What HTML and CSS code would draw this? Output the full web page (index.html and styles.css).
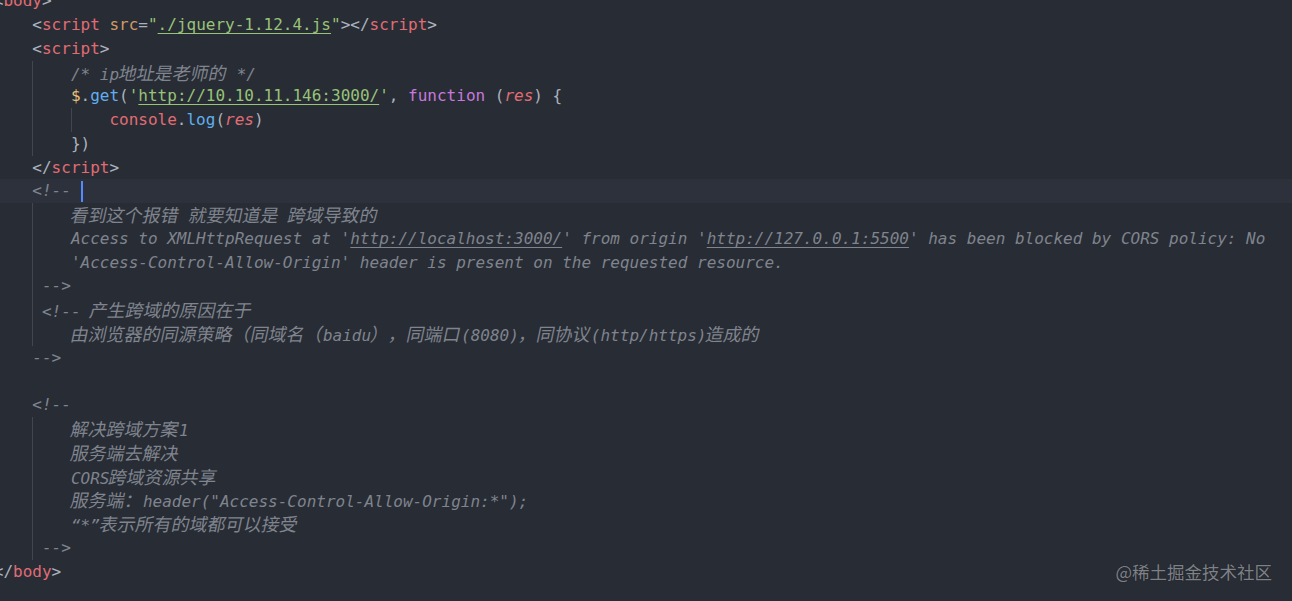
FILE: index.html
```html
<!DOCTYPE html>
<html lang="zh">
<head>
<meta charset="utf-8">
<title>editor</title>
<link rel="stylesheet" href="styles.css">
</head>
<body>
<main class="editor">
  <div class="code">
    <div class="ln">&lt;<span class="t">body</span>&gt;</div>
    <div class="ln">    &lt;<span class="t">script</span> <span class="a">src</span>=<span class="s">"<span class="u">./jquery-1.12.4.js</span>"</span>&gt;&lt;/<span class="t">script</span>&gt;</div>
    <div class="ln">    &lt;<span class="t">script</span>&gt;</div>
    <div class="ln g4">        <span class="c">/* ip<span class="zh">地址是老师的</span> */</span></div>
    <div class="ln g4">        <span class="y">$</span>.<span class="f">get</span>(<span class="s">'<span class="u">http://10.10.11.146:3000/</span>'</span>, <span class="k">function</span> (<span class="pi">res</span>) {</div>
    <div class="ln g48">            <span class="v">console</span>.<span class="f">log</span>(<span class="pi">res</span>)</div>
    <div class="ln g4">        })</div>
    <div class="ln">    &lt;/<span class="t">script</span>&gt;</div>
    <div class="ln cur">    <span class="c">&lt;!-- </span><span class="caret"></span></div>
    <div class="ln g4 c">        <span class="zh">看到这个报错</span> <span class="zh">就要知道是</span> <span class="zh">跨域导致的</span></div>
    <div class="ln g4 c">        Access to XMLHttpRequest at '<span class="u">http://localhost:3000/</span>' from origin '<span class="u">http://127.0.0.1:5500</span>' has been blocked by CORS policy: No</div>
    <div class="ln g4 c">        'Access-Control-Allow-Origin' header is present on the requested resource.</div>
    <div class="ln g4 c">     --&gt;</div>
    <div class="ln g4 c">     &lt;!-- <span class="zh">产生跨域的原因在于</span></div>
    <div class="ln g4 c">        <span class="zh">由浏览器的同源策略（同域名（</span>baidu<span class="zh">），同端口</span>(8080)<span class="zh">，同协议</span>(http/https)<span class="zh">造成的</span></div>
    <div class="ln c">    --&gt;</div>
    <div class="ln"> </div>
    <div class="ln c">    &lt;!--</div>
    <div class="ln g4 c">        <span class="zh">解决跨域方案</span>1</div>
    <div class="ln g4 c">        <span class="zh">服务端去解决</span></div>
    <div class="ln g4 c">        CORS<span class="zh">跨域资源共享</span></div>
    <div class="ln g4 c">        <span class="zh">服务端：</span>header("Access-Control-Allow-Origin:*");</div>
    <div class="ln g4 c">        “*”<span class="zh">表示所有的域都可以接受</span></div>
    <div class="ln g4 c">     --&gt;</div>
    <div class="ln">&lt;/<span class="t">body</span>&gt;</div>
  </div>
  <div class="mark">@稀土掘金技术社区</div>
</main>
</body>
</html>
```

FILE: styles.css
```css
html, body {
  margin: 0;
  padding: 0;
  background: #282c34;
}

.editor {
  position: relative;
  width: 1292px;
  height: 601px;
  overflow: hidden;
  background: #282c34;
}

.code {
  margin-top: -10.8px;
  margin-left: -6.2px;
  font-family: "DejaVu Sans Mono", "Noto Sans CJK SC", monospace;
  font-size: 16px;
  line-height: 23.78px;
  color: #abb2bf;
  text-spacing-trim: space-all;
}

.ln {
  height: 23.78px;
  white-space: pre;
  background-repeat: no-repeat;
}

.g4 {
  background-image: linear-gradient(#41464f, #41464f);
  background-size: 1px 100%;
  background-position: 38.5px 0;
}

.g48 {
  background-image: linear-gradient(#41464f, #41464f), linear-gradient(#41464f, #41464f);
  background-size: 1px 100%, 1px 100%;
  background-position: 38.5px 0, 77px 0;
}

.cur {
  background-color: #2c313c;
}

.caret {
  display: inline-block;
  width: 2px;
  height: 21px;
  margin-top: 2px;
  vertical-align: top;
  background: #528bff;
}

.t { color: #e06c75; }
.a { color: #d19a66; }
.s { color: #98c379; }
.f { color: #61afef; }
.k { color: #c678dd; }
.v { color: #e06c75; }
.y { color: #e5c07b; }
.pi { color: #e06c75; font-style: italic; }

.u {
  text-decoration: underline;
  text-underline-offset: 3px;
  text-decoration-thickness: 1px;
}

.c {
  color: #7f848e;
  font-style: italic;
}

.zh {
  font-family: "Noto Sans CJK SC", sans-serif;
  font-size: 18px;
  text-spacing-trim: space-all;
}

.c .zh {
  display: inline-block;
  font-style: normal;
  transform: skewX(-12deg);
}

.mark {
  position: absolute;
  right: 20px;
  bottom: 18px;
  font-family: "Noto Sans CJK SC", sans-serif;
  font-size: 17.5px;
  line-height: 22px;
  color: rgba(160, 164, 170, 0.75);
  text-shadow: 0 0 1px rgba(0, 0, 0, 0.4);
}
```
